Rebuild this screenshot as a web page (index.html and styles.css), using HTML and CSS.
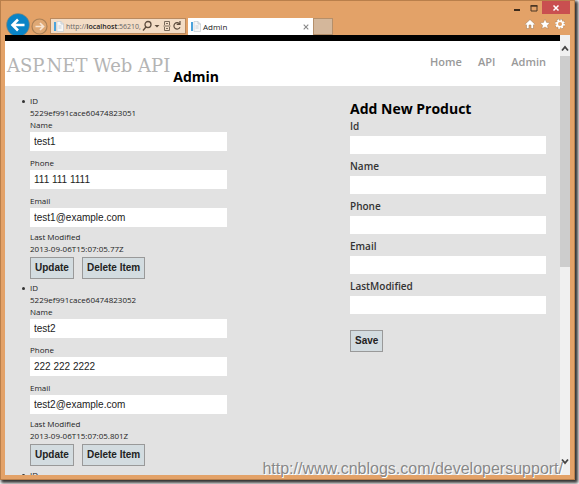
FILE: index.html
```html
<!DOCTYPE html>
<html lang="en">
<head>
<meta charset="utf-8">
<title>Admin</title>
<link rel="stylesheet" href="styles.css">
</head>
<body>
<div class="window">
  <div class="chrome">
    <div class="toolbar">
      <button class="back" aria-label="Back"><svg viewBox="0 0 24 24"><circle cx="12" cy="12" r="11.5" fill="#0a84c6" stroke="#a58765" stroke-width=".6"/><path d="M18.500 12H6.500M12 6.500L6.500 12l5.500 5.500" fill="none" stroke="#fff" stroke-width="2.600"/></svg></button>
      <button class="forward" aria-label="Forward"><svg viewBox="0 0 17 17"><circle cx="8.500" cy="8.500" r="7.500" fill="#dfa874" stroke="#aa8057" stroke-width="1.200"/><path d="M4.500 8.500h8M9 5l3.500 3.500L9 12" fill="none" stroke="#f7e5d3" stroke-width="1.700"/></svg></button>
      <div class="address">
        <svg class="page-icon" viewBox="0 0 10 11"><path d="M0 1h2v9H0z" fill="#4ba3dc"/><path d="M3 .5h4l2.500 2.500v7.500H3z" fill="#f7f7f7" stroke="#c4ccd2" stroke-width=".7"/><path d="M7 .5V3h2.500M4.500 5h3M4.500 7h3" fill="none" stroke="#b5c0c8" stroke-width=".7"/></svg>
        <span class="url">http://<b>localhost</b>:56210,</span>
        <svg class="address-tools" viewBox="0 0 40 12"><g fill="none" stroke="#5c4b3c" stroke-width="1.300"><circle cx="6" cy="4.500" r="3"/><path d="M4 7L1 10.500"/></g><path d="M12.500 5h5L15 7.500z" fill="#5c4b3c"/><path d="M22.500 5V1.500h5V5M22.500 7v3.500h5V7M21.500 6h7M24 3.500h2M24 8.500h2" fill="none" stroke="#7a6a5a"/><path d="M37.700 4A3.200 3.200 0 1 0 38 7.300M38 1v3.300h-3.300" fill="none" stroke="#5c4b3c" stroke-width="1.200"/></svg>
      </div>
      <div class="tab">
        <svg class="page-icon" viewBox="0 0 10 11"><path d="M0 1h2v9H0z" fill="#4ba3dc"/><path d="M3 .5h4l2.500 2.500v7.500H3z" fill="#f7f7f7" stroke="#c4ccd2" stroke-width=".7"/><path d="M7 .5V3h2.500M4.500 5h3M4.500 7h3" fill="none" stroke="#b5c0c8" stroke-width=".7"/></svg>
        <span class="tab-title">Admin</span>
        <button class="tab-close" aria-label="Close tab"><svg viewBox="0 0 6 6"><path d="M.7.7l4.600 4.600M5.300.7L.7 5.300" stroke="#888" stroke-width="1.100"/></svg></button>
      </div>
      <button class="new-tab" aria-label="New tab"></button>
    </div>
    <div class="corner">
      <div class="controls">
        <button class="control" aria-label="Minimize"><svg viewBox="0 0 8 8"><path d="M1 5h6v2H1z" fill="#3d2b1b"/></svg></button>
        <button class="control" aria-label="Maximize"><svg viewBox="0 0 8 8"><path d="M1 2h6v5H1z" fill="none" stroke="#4a3624"/><path d="M.5 1h7v1.500h-7z" fill="#4a3624"/></svg></button>
        <button class="control close" aria-label="Close"><svg viewBox="0 0 8 8"><path d="M1.500 1.500l5 5M6.500 1.500l-5 5" stroke="#fff" stroke-width="1.500"/></svg></button>
      </div>
      <div class="tools">
        <button aria-label="Home page"><svg viewBox="0 0 10 10"><path d="M0 5.200L5 .5l5 4.700-1 1-.5-.5V9.500h-2.500V6H4v3.500H1.500V5.700L1 6.200z" fill="#fff" stroke="#9b7450" stroke-width=".5"/></svg></button>
        <button aria-label="Favorites"><svg viewBox="0 0 10 10"><path d="M5 0l1.500 3.400 3.500.4-2.600 2.400.7 3.600L5 8 1.900 9.800l.7-3.600L0 3.800l3.500-.4z" fill="#fff" stroke="#9b7450" stroke-width=".4"/></svg></button>
        <button aria-label="Settings"><svg viewBox="0 0 10 10"><circle cx="5" cy="5" r="4" fill="none" stroke="#9b7450" stroke-width="2.600" stroke-dasharray="1.900 1.240"/><circle cx="5" cy="5" r="4" fill="none" stroke="#fff" stroke-width="1.800" stroke-dasharray="1.700 1.440"/><circle cx="5" cy="5" r="2.800" fill="none" stroke="#fff" stroke-width="1.600"/></svg></button>
      </div>
    </div>
  </div>
  <div class="viewport">
    <div class="page">
      <header class="header">
        <a class="logo" href="#">ASP.NET Web API</a>
        <h1 class="page-title">Admin</h1>
        <nav class="nav"><a href="#">Home</a><a href="#">API</a><a href="#">Admin</a></nav>
      </header>
      <main class="main">
        <ul class="products">
          <li class="product">
            <div>ID</div>
            <div>5229ef991cace60474823051</div>
            <div class="field"><label for="name1">Name</label><input id="name1" value="test1"></div>
            <div class="field"><label for="phone1">Phone</label><input id="phone1" value="111 111 1111"></div>
            <div class="field"><label for="email1">Email</label><input id="email1" value="test1@example.com"></div>
            <div>Last Modified</div>
            <div>2013-09-06T15:07:05.77Z</div>
            <div class="actions"><button class="button">Update</button><button class="button">Delete Item</button></div>
          </li>
          <li class="product">
            <div>ID</div>
            <div>5229ef991cace60474823052</div>
            <div class="field"><label for="name2">Name</label><input id="name2" value="test2"></div>
            <div class="field"><label for="phone2">Phone</label><input id="phone2" value="222 222 2222"></div>
            <div class="field"><label for="email2">Email</label><input id="email2" value="test2@example.com"></div>
            <div>Last Modified</div>
            <div>2013-09-06T15:07:05.801Z</div>
            <div class="actions"><button class="button">Update</button><button class="button">Delete Item</button></div>
          </li>
          <li class="product">
            <div>ID</div>
          </li>
        </ul>
        <form class="add-form">
          <h2>Add New Product</h2>
          <label for="new-id">Id</label><input id="new-id">
          <label for="new-name">Name</label><input id="new-name">
          <label for="new-phone">Phone</label><input id="new-phone">
          <label for="new-email">Email</label><input id="new-email">
          <label for="new-modified">LastModified</label><input id="new-modified">
          <button class="button save" type="button">Save</button>
        </form>
      </main>
    </div>
    <div class="scrollbar">
      <svg class="arrow" viewBox="0 0 10 20"><path d="M2 15l3-3.500L8 15" fill="none" stroke="#444" stroke-width="1.800"/></svg>
      <div class="track"><div class="thumb"></div></div>
      <svg class="arrow" viewBox="0 0 10 20"><path d="M2 5l3 3.500L8 5" fill="none" stroke="#444" stroke-width="1.800"/></svg>
    </div>
  </div>
  <div class="watermark">http://www.cnblogs.com/developersupport/</div>
</div>
</body>
</html>
```
FILE: styles.css
```css
* { box-sizing: border-box; }
body {
  margin: 0;
  height: 100vh;
  padding: 0 4px 4px 0;
  background: #fff;
  font-family: "Open Sans", "Noto Sans", sans-serif;
  overflow: hidden;
}
button { padding: 0; border: 0; background: none; font: inherit; }
svg { display: block; }
a { text-decoration: none; }

.window {
  position: relative;
  display: flex;
  flex-direction: column;
  height: 100%;
  padding: 0 4px 4px;
  border: 1px solid #b97f4b;
  background: #e3a268;
  box-shadow: 2px 2px 3px 1px #333;
}
.chrome {
  display: flex;
  justify-content: space-between;
  flex: none;
  height: 34px;
}
.toolbar { display: flex; align-items: flex-end; }
.back { width: 24px; height: 22px; margin-left: 1px; overflow: hidden; }
.back svg { width: 24px; height: 24px; }
.forward { width: 17px; height: 18px; margin: 0 1px 0 1px; }
.forward svg { width: 17px; height: 17px; }
.address {
  display: flex;
  align-items: center;
  width: 136px;
  height: 16px;
  margin: 0 2px 1px 1px;
  padding: 0 3px;
  border: 1px solid #b98a60;
  background: #f3dcc5;
  font-size: 7px;
  color: #666;
}
.page-icon { flex: none; width: 10px; height: 11px; }
.url { flex: 1; margin-left: 2px; white-space: nowrap; }
.url b { color: #222; font-weight: 600; }
.address-tools { flex: none; width: 40px; height: 12px; }
.tab {
  display: flex;
  align-items: center;
  width: 125px;
  height: 17px;
  padding: 0 4px 0 3px;
  background: #fff;
  font-size: 8px;
  color: #222;
}
.tab-title { flex: 1; margin-left: 2px; }
.tab-close svg { width: 6px; height: 6px; }
.new-tab {
  width: 20px;
  height: 17px;
  border: 1px solid #b58f6a;
  background: #d4b79b;
}
.corner { display: flex; flex-direction: column; justify-content: space-between; }
.controls { display: flex; }
.control { display: flex; align-items: center; justify-content: center; width: 17px; height: 13px; }
.control svg { width: 8px; height: 8px; }
.control.close { width: 28px; background: #c94f50; }
.tools { display: flex; justify-content: flex-end; gap: 5px; padding: 0 5px 6px 0; }
.tools svg { width: 10px; height: 10px; }

.viewport { display: flex; flex: 1; min-height: 0; background: #e2e2e2; }
.page { flex: 1; min-width: 0; overflow: hidden; }
.header {
  display: flex;
  height: 51px;
  border-top: 6px solid #000;
  background: #fff;
}
.logo {
  margin: 13px 0 0 2px;
  color: #b4b4b4;
  font: 18px/24px "DejaVu Serif", serif;
  white-space: nowrap;
}
.page-title {
  margin: 26px 0 0 3px;
  font-size: 14px;
  line-height: 20px;
}
.nav {
  display: flex;
  gap: 16px;
  margin: 12px 14px 0 auto;
  font-size: 11px;
  font-weight: 600;
  line-height: 18px;
}
.nav a { color: #999; }

.main {
  display: flex;
  justify-content: space-between;
  padding: 9px 14px 0 25px;
  color: #333;
}
.products {
  width: 197px;
  margin: 0;
  padding: 0;
  font-size: 8px;
  line-height: 12px;
  color: #222;
}
.product { display: block; position: relative; margin-bottom: 3px; }
.product::before {
  content: "";
  position: absolute;
  left: -8px;
  top: 5px;
  width: 3px;
  height: 3px;
  border-radius: 50%;
  background: #333;
}
.field { margin-bottom: 6px; }
.field:nth-child(5) { margin-bottom: 4px; }
label { display: block; }
input {
  display: block;
  width: 100%;
  height: 19px;
  padding: 0 4px;
  border: 0;
  background: #fff;
  color: #222;
  font: 10px/19px "Liberation Sans", sans-serif;
}
.field input { margin-top: 1px; }
.actions { display: flex; gap: 8px; margin-top: 2px; }
.button {
  height: 22px;
  padding: 0 4px;
  border: 1px solid #999;
  background: #d3dce0;
  color: #222;
  font: bold 10px/20px "Liberation Sans", sans-serif;
}
.add-form {
  width: 196px;
  padding-top: 4px;
  font-size: 10px;
  font-weight: 600;
  line-height: 14px;
}
.add-form h2 {
  margin: 0;
  color: #000;
  font-size: 14px;
  line-height: 20px;
}
.add-form input { height: 18px; margin: 3px 0 5px; }
.add-form .save { margin-top: 11px; }

.scrollbar { display: flex; flex-direction: column; width: 10px; background: #f0f0f0; }
.arrow { flex: none; width: 10px; height: 21px; }
.track { flex: 1; }
.thumb { height: 53%; background: #cdcdcd; }

.watermark {
  position: absolute;
  right: 11px;
  bottom: 0;
  color: #888;
  font: 16px/20px "Liberation Sans", sans-serif;
  text-shadow: 1px 1px 0 #fff;
}
```
